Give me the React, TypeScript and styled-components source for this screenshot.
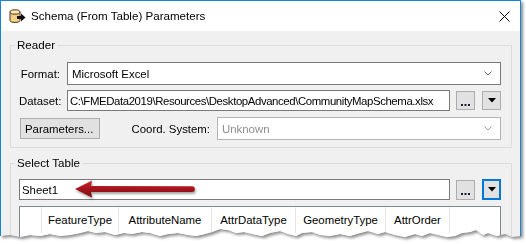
import React from 'react';
import styled, { createGlobalStyle } from 'styled-components';

const GlobalStyle = createGlobalStyle`
  html, body { margin: 0; padding: 0; background: #ffffff; }
  body {
    font-family: "Liberation Sans", Arial, sans-serif;
    font-size: 11.4px;
    color: #000;
  }
  * { box-sizing: border-box; }
`;

const Stage = styled.div`
  width: 526px;
  height: 244px;
  position: relative;
  overflow: hidden;
  background: #fff;
`;

const ShadowWrap = styled.div`
  width: 521px;
  filter: drop-shadow(2px 2px 1.5px rgba(0, 0, 0, 0.45));
`;

const tear = [
  [521, 236], [512, 237], [505, 234], [497, 236], [488, 233], [483, 235], [476, 230], [470, 232],
  [462, 233], [455, 236], [447, 237], [438, 235], [430, 233], [422, 236], [415, 234], [405, 237],
  [395, 235], [385, 232], [378, 234], [368, 231], [360, 233], [350, 236], [340, 234], [330, 236],
  [320, 235], [312, 232], [302, 233], [296, 236], [288, 234], [280, 231], [270, 233], [262, 236],
  [252, 234], [244, 232], [236, 233], [228, 230], [220, 229], [212, 232], [205, 234], [196, 236],
  [188, 235], [178, 233], [168, 234], [160, 236], [150, 233], [142, 232], [132, 234], [124, 233],
  [115, 235], [105, 232], [96, 233], [88, 231], [80, 233], [70, 235], [60, 236], [50, 234],
  [40, 236], [30, 235], [20, 237], [10, 235], [0, 236],
];
const tearPath = `polygon(0px 0px, 521px 0px, ${tear.map(([x, y]) => `${x}px ${y}px`).join(', ')})`;

const Window = styled.div`
  width: 521px;
  height: 240px;
  border: 1px solid #1a83d6;
  border-bottom: none;
  background: #f0f0f0;
  display: flex;
  flex-direction: column;
  clip-path: ${tearPath};
`;

const TitleBar = styled.div`
  height: 30px;
  flex: none;
  background: #ffffff;
  display: flex;
  align-items: center;
  padding: 0 10px 0 8px;
`;

const TitleText = styled.span`
  margin-left: 5px;
  flex: 1;
  font-size: 11.6px;
  line-height: 16px;
  color: #000;
`;

const Body = styled.div`
  flex: 1;
  padding: 6px 8px 0 9px;
  display: flex;
  flex-direction: column;
  gap: 7px;
`;

const Group = styled.fieldset`
  margin: 0;
  padding: 0;
  min-width: 0;
  border: 1px solid #dcdcdc;
`;

const Legend = styled.legend`
  margin-left: 4px;
  padding: 0 2px;
  line-height: 16px;
  font-size: 11.6px;
`;

const GroupBody = styled.div<{ $top: number; $bottom: number }>`
  padding: ${(p) => p.$top}px 10px ${(p) => p.$bottom}px 8px;
  display: flex;
  flex-direction: column;
`;

const Row = styled.div<{ $gap?: number }>`
  display: flex;
  align-items: center;
  margin-top: ${(p) => p.$gap ?? 0}px;
`;

const Label = styled.span<{ $w: number }>`
  width: ${(p) => p.$w}px;
  flex: none;
  text-align: right;
  margin-right: 7px;
  white-space: nowrap;
`;

const Combo = styled.div<{ $disabled?: boolean }>`
  flex: 1;
  height: 23px;
  border: 1px solid ${(p) => (p.$disabled ? '#b4b4b4' : '#7a7a7a')};
  background: #fff;
  display: flex;
  align-items: center;
  padding: 0 8px 0 4px;
  color: ${(p) => (p.$disabled ? '#8d8d8d' : '#000')};
`;

const ComboText = styled.span`
  flex: 1;
  white-space: nowrap;
`;

const TextBox = styled.div<{ $tight?: boolean }>`
  flex: 1;
  min-width: 0;
  height: 21px;
  border: 1px solid #7a7a7a;
  background: #fff;
  display: flex;
  align-items: center;
  padding: 0 2px;
  white-space: nowrap;
  overflow: hidden;
  letter-spacing: ${(p) => (p.$tight ? '-0.4px' : 'normal')};
`;

const SmallButton = styled.div<{ $focus?: boolean; $h: number; $ml: number }>`
  width: 19px;
  height: ${(p) => p.$h}px;
  margin-left: ${(p) => p.$ml}px;
  flex: none;
  background: #e1e1e1;
  border: ${(p) => (p.$focus ? '2px solid #0078d7' : '1px solid #adadad')};
  display: flex;
  align-items: center;
  justify-content: center;
`;

const DotsIcon = () => (
  <svg width="9" height="12" viewBox="0 0 9 12">
    <rect x="0" y="9" width="2" height="2" fill="#1a1a3a" />
    <rect x="3.5" y="9" width="2" height="2" fill="#1a1a3a" />
    <rect x="7" y="9" width="2" height="2" fill="#1a1a3a" />
  </svg>
);

const PushButton = styled.div`
  width: 80px;
  height: 21px;
  margin-left: 1px;
  flex: none;
  background: #e1e1e1;
  border: 1px solid #adadad;
  display: flex;
  align-items: center;
  padding-left: 4px;
`;

const Table = styled.div`
  margin-top: 6px;
  width: 482px;
  height: 60px;
  border: 1px solid #828790;
  background: #fff;
`;

const HeaderRow = styled.div`
  display: flex;
  height: 26px;
`;

const HeaderCell = styled.div<{ $w?: number }>`
  ${(p) => (p.$w ? `width: ${p.$w}px; flex: none;` : 'flex: 1;')}
  border-right: 1px solid #e5e5e5;
  display: flex;
  align-items: center;
  justify-content: center;
  white-space: nowrap;
  &:last-child { border-right: none; }
`;

const ArrowSvg = styled.svg`
  position: absolute;
  left: 70px;
  top: 176px;
  overflow: visible;
  filter: drop-shadow(1px 2px 1px rgba(0, 0, 0, 0.35));
`;

const Chevron = ({ color }: { color: string }) => (
  <svg width="8" height="5" viewBox="0 0 8 5">
    <polyline points="0.5,0.5 4,4 7.5,0.5" fill="none" stroke={color} strokeWidth="1" />
  </svg>
);

const DownTriangle = () => (
  <svg width="8" height="5" viewBox="0 0 8 5">
    <polygon points="0,0 8,0 4,4.5" fill="#000" />
  </svg>
);

const AppIcon = () => (
  <svg width="17" height="15" viewBox="0 0 17 15">
    <path d="M1 3 V11.5 A5 2 0 0 0 11 11.5 V3" fill="#f4cf86" stroke="#4a3a1e" strokeWidth="1" />
    <ellipse cx="6" cy="3" rx="5" ry="2.2" fill="#fbe4b0" stroke="#4a3a1e" strokeWidth="1" />
    <rect x="8" y="7" width="4.5" height="3" fill="#111" />
    <polygon points="12,4.5 16.5,8.5 12,12.5" fill="#111" />
  </svg>
);

const CloseIcon = () => (
  <svg width="11" height="11" viewBox="0 0 11 11">
    <line x1="0.5" y1="0.5" x2="10.5" y2="10.5" stroke="#000" strokeWidth="1" />
    <line x1="10.5" y1="0.5" x2="0.5" y2="10.5" stroke="#000" strokeWidth="1" />
  </svg>
);

const RedArrow = () => (
  <ArrowSvg width="132" height="28" viewBox="0 0 132 28">
    <defs>
      <linearGradient id="arrowGrad" x1="0" y1="0" x2="0" y2="1">
        <stop offset="0" stopColor="#c8242c" />
        <stop offset="0.5" stopColor="#a5151d" />
        <stop offset="1" stopColor="#7a0a10" />
      </linearGradient>
    </defs>
    <path
      d="M5 13 L22 4.5 L21 10 L122 10.2 A2.9 2.9 0 0 1 122 16 L21 16 L22 21.5 Z"
      fill="url(#arrowGrad)"
    />
  </ArrowSvg>
);

const columns: { name: string; w?: number }[] = [
  { name: '', w: 22 },
  { name: 'FeatureType', w: 77 },
  { name: 'AttributeName', w: 93 },
  { name: 'AttrDataType', w: 84 },
  { name: 'GeometryType', w: 90 },
  { name: 'AttrOrder', w: 64 },
  { name: '' },
];

export default function App() {
  return (
    <Stage>
      <GlobalStyle />
      <ShadowWrap>
        <Window>
          <TitleBar>
            <AppIcon />
            <TitleText>Schema (From Table) Parameters</TitleText>
            <CloseIcon />
          </TitleBar>
          <Body>
            <Group>
              <Legend>Reader</Legend>
              <GroupBody $top={9} $bottom={7}>
                <Row>
                  <Label $w={41}>Format:</Label>
                  <Combo>
                    <ComboText>Microsoft Excel</ComboText>
                    <Chevron color="#606060" />
                  </Combo>
                </Row>
                <Row $gap={5}>
                  <Label $w={41}>Dataset:</Label>
                  <TextBox $tight>C:\FMEData2019\Resources\DesktopAdvanced\CommunityMapSchema.xlsx</TextBox>
                  <SmallButton $h={19} $ml={6}>
                    <DotsIcon />
                  </SmallButton>
                  <SmallButton $h={19} $ml={7}>
                    <DownTriangle />
                  </SmallButton>
                </Row>
                <Row $gap={6}>
                  <PushButton>Parameters...</PushButton>
                  <Label $w={110}>Coord. System:</Label>
                  <Combo $disabled>
                    <ComboText>Unknown</ComboText>
                    <Chevron color="#a0a0a0" />
                  </Combo>
                </Row>
              </GroupBody>
            </Group>
            <Group>
              <Legend>Select Table</Legend>
              <GroupBody $top={8} $bottom={0}>
                <Row>
                  <TextBox>Sheet1</TextBox>
                  <SmallButton $h={20} $ml={6}>
                    <DotsIcon />
                  </SmallButton>
                  <SmallButton $h={21} $ml={7} $focus>
                    <DownTriangle />
                  </SmallButton>
                </Row>
                <Table>
                  <HeaderRow>
                    {columns.map((c, i) => (
                      <HeaderCell key={i} $w={c.w}>
                        {c.name}
                      </HeaderCell>
                    ))}
                  </HeaderRow>
                </Table>
              </GroupBody>
            </Group>
          </Body>
        </Window>
      </ShadowWrap>
      <RedArrow />
    </Stage>
  );
}
